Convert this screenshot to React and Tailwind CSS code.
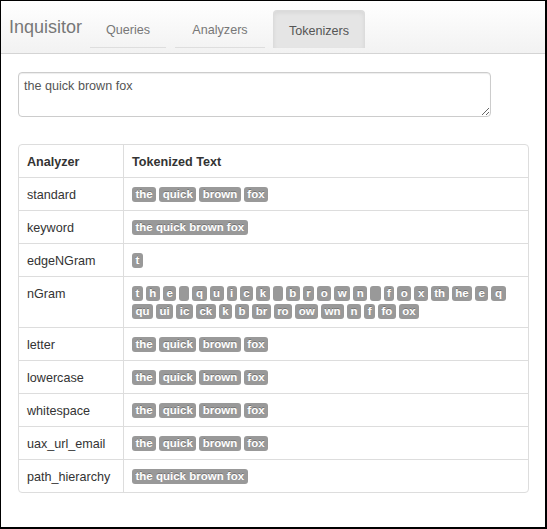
import React from 'react';

const TABS = [
  { label: 'Queries',    width: 'w-[76px]', gap: 'ml-0' },
  { label: 'Analyzers',  width: 'w-[90px]', gap: 'ml-[9px]' },
  { label: 'Tokenizers', width: 'w-[92px]', gap: 'ml-[8px]', active: true },
];

const WORDS = ['the', 'quick', 'brown', 'fox'];
const WHOLE = ['the quick brown fox'];

const ROWS = [
  { name: 'standard',        tokens: WORDS },
  { name: 'keyword',         tokens: WHOLE },
  { name: 'edgeNGram',       tokens: ['t'] },
  {
    name: 'nGram',
    tokens: [
      't', 'h', 'e', ' ', 'q', 'u', 'i', 'c', 'k', ' ', 'b', 'r', 'o', 'w', 'n', ' ', 'f', 'o', 'x',
      'th', 'he', 'e ', ' q', 'qu', 'ui', 'ic', 'ck', 'k ', ' b', 'br', 'ro', 'ow', 'wn', 'n ', ' f', 'fo', 'ox',
    ],
  },
  { name: 'letter',          tokens: WORDS },
  { name: 'lowercase',       tokens: WORDS },
  { name: 'whitespace',      tokens: WORDS },
  { name: 'uax_url_email',   tokens: WORDS },
  { name: 'path_hierarchy',  tokens: WHOLE },
];

function Token({ text }) {
  const blank = text.trim() === '';
  return (
    <span
      className={
        'inline-block h-[15px] leading-[15px] px-[3.5px] rounded-[3px] bg-[#999] text-white text-[11.5px] font-bold [text-shadow:0_-1px_0_rgba(0,0,0,0.25)] ' +
        (blank ? 'whitespace-pre' : 'whitespace-nowrap')
      }
    >
      {blank ? ' ' : text.trim()}
    </span>
  );
}

function Navbar() {
  return (
    <div className="h-[53px] border-b border-[#d4d4d4] bg-linear-to-b from-white to-[#f2f2f2] flex items-start">
      {/* Brand */}
      <div className="w-[89px] pl-2 mt-[16px] text-[18px] leading-[20px] text-[#777]">Inquisitor</div>

      {/* Tabs */}
      <div className="flex mt-[9px]">
        {TABS.map(({ label, width, gap, active }) => (
          <div
            key={label}
            className={
              'h-[38px] pt-[3px] flex items-center justify-center text-[12.6px] ' + width + ' ' + gap + ' ' +
              (active
                ? 'bg-[#e5e5e5] text-[#555] rounded-t-[4px] border border-b-0 border-[#dcdcdc] shadow-[inset_0_2px_4px_rgba(0,0,0,0.06)]'
                : 'text-[#777] border-b border-[#dedede]')
            }
          >
            {label}
          </div>
        ))}
      </div>
    </div>
  );
}

export default function App() {
  return (
    <div className="w-[547px] h-[529px] box-border overflow-hidden bg-white border-t border-l border-r-2 border-b-2 border-black font-['Liberation_Sans',Arial,sans-serif]">
      <Navbar />

      <div className="pl-[17px] pt-[18px]">
        <textarea
          defaultValue="the quick brown fox"
          className="block w-[473px] h-[45px] border border-[#ccc] rounded-[4px] px-[5px] py-[4px] text-[12.6px] leading-[18px] text-[#555] shadow-[inset_0_1px_1px_rgba(0,0,0,0.075)] outline-none"
        />

        <div className="mt-[27px] w-[511px] border border-[#ddd] rounded-[4px] text-[12.6px] leading-[15px] text-[#333]">
          {/* Header */}
          <div className="flex">
            <div className="w-[105px] shrink-0 border-r border-[#ddd] px-2 pt-[10px] pb-[7px] font-bold">Analyzer</div>
            <div className="flex-1 px-2 pt-[10px] pb-[7px] font-bold">Tokenized Text</div>
          </div>

          {ROWS.map(({ name, tokens }) => (
            <div key={name} className="flex border-t border-[#ddd]">
              <div className="w-[105px] shrink-0 border-r border-[#ddd] px-2 pt-[10px] pb-[7px]">{name}</div>
              <div className="flex-1 px-2 pt-[9px] pb-[8px] flex flex-wrap gap-x-[3px] gap-y-[3px]">
                {tokens.map((t, i) => (
                  <Token key={i} text={t} />
                ))}
              </div>
            </div>
          ))}
        </div>
      </div>
    </div>
  );
}
